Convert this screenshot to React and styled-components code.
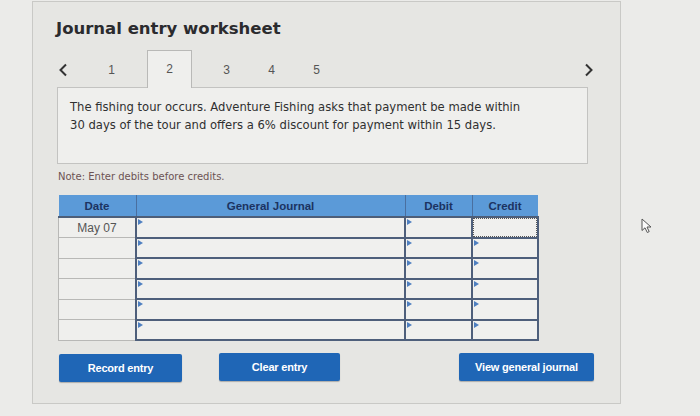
import React from "react";
import styled, { createGlobalStyle } from "styled-components";

const GlobalStyle = createGlobalStyle`
  html, body {
    margin: 0;
    background: #ebebe9;
  }
  body {
    width: 700px;
    height: 416px;
    overflow: hidden;
    font-family: "DejaVu Sans", Verdana, sans-serif;
  }
`;

// layout
const Page = styled.div`
  position: relative;
  padding: 1px 0 0 32px;
  height: 415px;
`;

const Panel = styled.div`
  box-sizing: border-box;
  width: 589px;
  height: 403px;
  border: 1px solid #c9c9c6;
  background: #e6e6e3;
  padding: 0 0 0 23px;
`;

const Title = styled.h1`
  margin: 15px 0 0 0;
  font-family: "DejaVu Sans", Verdana, sans-serif;
  font-size: 16.5px;
  line-height: 24px;
  font-weight: bold;
  color: #2b2b2e;
`;

const TabRow = styled.div`
  display: flex;
  align-items: flex-end;
  width: 545px;
  height: 38px;
  margin-top: 9px;
  position: relative;
  z-index: 1;
`;

const Arrow = styled.div`
  width: ${(p) => p.w || 33}px;
  height: 37px;
  display: flex;
  align-items: center;
  justify-content: ${(p) => p.align || "flex-start"};
  padding-left: ${(p) => p.pl || 0}px;
  box-sizing: border-box;
  color: #333;
  margin-left: ${(p) => (p.end ? "auto" : "0")};
`;

const Tab = styled.div`
  box-sizing: border-box;
  width: 45px;
  height: ${(p) => (p.active ? 38 : 37)}px;
  display: flex;
  align-items: center;
  justify-content: center;
  font-family: "Liberation Sans", Arial, sans-serif;
  font-size: 12px;
  color: #555;
  margin: ${(p) => (p.active ? "0 12px 0 13px" : "0")};
  background: ${(p) => (p.active ? "#efefed" : "transparent")};
  border: ${(p) => (p.active ? "1px solid #b9b9b7" : "none")};
  border-bottom: none;
  padding-bottom: ${(p) => (p.active ? 2 : 0)}px;
`;

const Scenario = styled.div`
  box-sizing: border-box;
  width: 531px;
  height: 77px;
  margin: -1px 0 0 1px;
  border: 1px solid #c3c3c1;
  background: #efefed;
  padding: 10px 12px;
  font-size: 11.6px;
  line-height: 18px;
  color: #303030;
`;

const Note = styled.p`
  margin: 6px 0 0 2px;
  font-size: 10px;
  line-height: 14px;
  color: #6c5353;
`;

const Journal = styled.table`
  margin: 11px 0 0 2px;
  border-collapse: collapse;
  width: 476px;
  table-layout: fixed;
  font-family: "Liberation Sans", Arial, sans-serif;
`;

const Head = styled.th`
  width: ${(p) => p.w}px;
  height: 21px;
  padding: 0;
  background: #5b9ad8;
  color: #1c3361;
  font-size: 11.5px;
  font-weight: bold;
  border-left: ${(p) => (p.first ? "none" : "1px solid #4a6f9f")};
  border-bottom: 2px solid #4d5e78;
  text-align: center;
`;

const DateCell = styled.td`
  height: 18.5px;
  padding: 0;
  border: 1px solid #b8b8b6;
  background: #efefed;
  text-align: center;
  font-size: 12px;
  color: #555;
`;

const InputCell = styled.td`
  position: relative;
  height: 18.5px;
  padding: 0;
  border: 2px solid #4e5f7b;
  background: #f0f0ee;
  &::before {
    content: "";
    position: absolute;
    left: 1px;
    top: 1px;
    border-top: 3px solid transparent;
    border-bottom: 3px solid transparent;
    border-left: 5px solid #4e7fc0;
    display: ${(p) => (p.focused ? "none" : "block")};
  }
  &::after {
    content: "";
    position: absolute;
    inset: 0;
    border: 1px dotted #555;
    display: ${(p) => (p.focused ? "block" : "none")};
  }
`;

const Actions = styled.div`
  display: flex;
  align-items: flex-start;
  margin-top: 12px;
  width: 536px;
  padding-left: 3px;
`;

const Button = styled.button`
  width: ${(p) => p.w}px;
  height: 28px;
  margin-left: ${(p) => p.ml || 0}px;
  margin-top: ${(p) => p.mt || 0}px;
  border: none;
  border-radius: 2px;
  background: #1f66b6;
  color: #fff;
  font-family: "Liberation Sans", Arial, sans-serif;
  font-weight: bold;
  font-size: 11px;
  letter-spacing: -0.2px;
  box-shadow: 0 1px 1px rgba(0, 0, 0, 0.25);
`;

const Cursor = styled.svg`
  position: absolute;
  left: 641px;
  top: 218px;
`;

const rows = [0, 1, 2, 3, 4, 5];

export default function App() {
  return (
    <>
      <GlobalStyle />
      <Page>
        <Panel>
          <Title>Journal entry worksheet</Title>
          <TabRow>
            <Arrow pl={2}>
              <svg width="10" height="14" viewBox="0 0 10 14">
                <path d="M8 1.5 L2.5 7 L8 12.5" fill="none" stroke="#333" strokeWidth="2" />
              </svg>
            </Arrow>
            <Tab>1</Tab>
            <Tab active>2</Tab>
            <Tab>3</Tab>
            <Tab>4</Tab>
            <Tab>5</Tab>
            <Arrow w={24} end align="center">
              <svg width="10" height="14" viewBox="0 0 10 14">
                <path d="M2 1.5 L7.5 7 L2 12.5" fill="none" stroke="#333" strokeWidth="2" />
              </svg>
            </Arrow>
          </TabRow>
          <Scenario>
            The fishing tour occurs. Adventure Fishing asks that payment be made within
            <br />
            30 days of the tour and offers a 6% discount for payment within 15 days.
          </Scenario>
          <Note>Note: Enter debits before credits.</Note>
          <Journal>
            <thead>
              <tr>
                <Head first w={77}>Date</Head>
                <Head w={268}>General Journal</Head>
                <Head w={66}>Debit</Head>
                <Head w={65}>Credit</Head>
              </tr>
            </thead>
            <tbody>
              {rows.map((r) => (
                <tr key={r}>
                  <DateCell>{r === 0 ? "May 07" : ""}</DateCell>
                  <InputCell />
                  <InputCell />
                  <InputCell focused={r === 0} />
                </tr>
              ))}
            </tbody>
          </Journal>
          <Actions>
            <Button w={123} mt={1}>Record entry</Button>
            <Button w={121} ml={37}>Clear entry</Button>
            <Button w={135} ml={119}>View general journal</Button>
          </Actions>
        </Panel>
        <Cursor width="14" height="16" viewBox="0 0 14 16">
          <path
            d="M1 1 L1 12.5 L4 9.8 L6.3 14.5 L8.2 13.6 L6 9 L10 9 Z"
            fill="#fafafa"
            stroke="#555"
            strokeWidth="1"
            strokeLinejoin="round"
          />
        </Cursor>
      </Page>
    </>
  );
}
